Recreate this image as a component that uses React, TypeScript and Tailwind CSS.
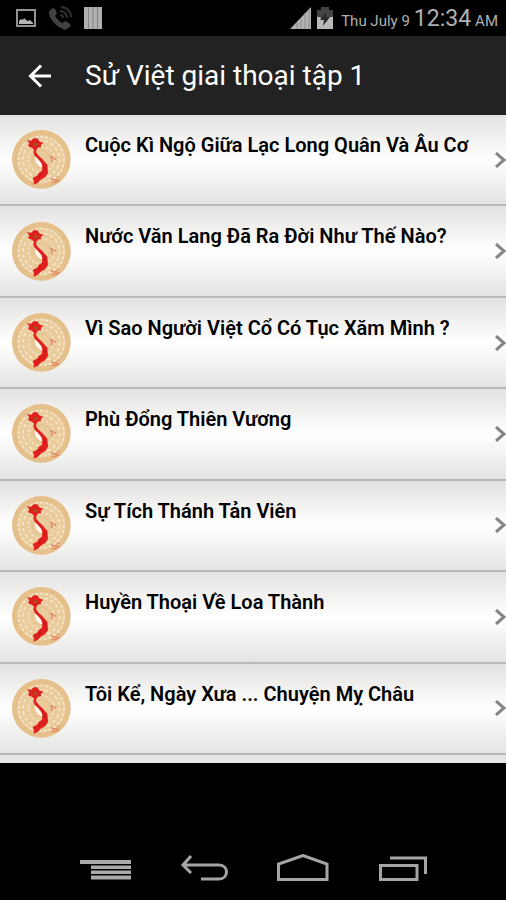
import React from 'react';

const STORIES = [
  'Cuộc Kì Ngộ Giữa Lạc Long Quân Và Âu Cơ',
  'Nước Văn Lang Đã Ra Đời Như Thế Nào?',
  'Vì Sao Người Việt Cổ Có Tục Xăm Mình ?',
  'Phù Đổng Thiên Vương',
  'Sự Tích Thánh Tản Viên',
  'Huyền Thoại Về Loa Thành',
  'Tôi Kể, Ngày Xưa ... Chuyện Mỵ Châu',
];

// Bronze drum medallion with the map of Vietnam
const DrumIcon: React.FC = () => (
  <svg viewBox="0 0 177 177" className="size-[59px] shrink-0" aria-hidden="true">
    <circle cx="88" cy="88" r="88" fill="#e5c08b" />
    <circle cx="88" cy="88" r="73" fill="#e9cb9c" />
    <g fill="none" stroke="#f5e6cd">
      <circle cx="88" cy="88" r="68" strokeWidth="5" strokeDasharray="9 6" />
      <circle cx="88" cy="88" r="55" strokeWidth="5" strokeDasharray="11 8" />
      <circle cx="88" cy="88" r="39" strokeWidth="4" strokeDasharray="8 6" />
    </g>
    <circle cx="88" cy="88" r="26" fill="none" stroke="#e3bf8c" strokeWidth="3" />
    <path d="M68 78L82 84L96 112L84 110L72 98Z" fill="#fffaf0" />
    <path
      d="M43 31L58 32L64 25L76 25L82 34L94 39L86 45L88 51L77 53L73 61L72 67L80 77L90 86L98 95L106 104L107 116L108 129L99 142L86 149L78 158L65 164L66 153L62 144L77 136L80 129L90 122L91 109L88 99L78 87L68 77L64 67L66 60L60 53L48 49L52 39Z"
      fill="#df201c"
    />
    <path d="M66 39L78 41L75 49L67 47Z" fill="#9a5a1c" />
    <path d="M96 106L100 118M86 134L80 143" stroke="#b81414" strokeWidth="3" />
    <path d="M115 79L123 84L119 89M127 89L131 84M117 92L123 94" fill="none" stroke="#e07a5c" strokeWidth="4" />
    <path
      d="M117 146L127 151L136 147M127 159L135 154L143 151M119 159L125 156M137 143L141 140"
      fill="none"
      stroke="#e2815f"
      strokeWidth="4"
    />
  </svg>
);

const StatusBar: React.FC = () => (
  <div className="h-9 bg-black flex items-center justify-between pl-4 pr-2 text-[#b0b0b0]">
    <div className="flex items-center gap-3">
      <svg viewBox="0 0 20 18" className="w-5 h-[18px]" aria-hidden="true">
        <rect x="1" y="1" width="18" height="16" fill="none" stroke="#929292" strokeWidth="2" />
        <path d="M3 15V12L5 10L7 11L8 9L10 11L12 12L14 11L17 14V15Z" fill="#b5b5b5" />
      </svg>
      <svg viewBox="0 0 24 26" className="w-6 h-[26px]" aria-hidden="true">
        <path
          d="M5 3L1 6C0 13 8 22 17 25L22 22C23 21 23 20 22 19L18 16L14 18C11 16 9 14 7 11L9 8L7 4Z"
          fill="#414141"
        />
        <path d="M12 10A3 3 0 0 1 15 13M12 6A7 7 0 0 1 19 13M13 2A10 10 0 0 1 23 12" fill="none" stroke="#303030" strokeWidth="2" />
      </svg>
      <svg viewBox="0 0 18 22" className="w-[18px] h-[22px]" aria-hidden="true">
        <rect width="18" height="22" fill="#b0b0b0" />
        <path d="M4.500 0V22M9 0V22M13.500 0V22" stroke="#858585" />
      </svg>
    </div>
    <div className="flex items-center">
      <svg viewBox="0 0 21 24" className="w-[21px] h-6 mr-1.5" aria-hidden="true">
        <path d="M0 23L21 1V23Z" fill="#b2b2b2" />
        <path d="M7 16V23M11 12V23M15 7V23M19 3V23" stroke="#8d8d8d" />
      </svg>
      <svg viewBox="0 0 16 24" className="w-4 h-6 mr-2" aria-hidden="true">
        <path d="M4 1H12V4H16V11H0V4H4Z" fill="#444444" />
        <path d="M0 11H3L7 13L11 11H16V23H0Z" fill="#b9b9b9" />
        <path d="M9 6L3 14H7L6 20L13 11H9Z" fill="#2c2c2c" />
      </svg>
      <p className="flex items-baseline gap-1 pt-1 text-[15px] leading-6 whitespace-nowrap">
        <span>Thu July 9</span>
        <span className="text-[23px] leading-6">12:34</span>
        <span>AM</span>
      </p>
    </div>
  </div>
);

const SystemNav: React.FC = () => (
  <nav className="h-16 bg-black flex justify-center items-center gap-[49px] px-4">
    <button type="button" aria-label="Menu">
      <svg viewBox="0 0 52 28" className="w-[52px] h-7" aria-hidden="true">
        <path d="M1 6H52V10H1ZM12 11.500H52V15H12ZM12 16.500H52V20H12ZM12 21.500H52V25.500H12Z" fill="#ababab" />
      </svg>
    </button>
    <button type="button" aria-label="Back">
      <svg viewBox="0 0 48 28" className="w-12 h-7" fill="none" stroke="#a5a5a5" strokeWidth="3" aria-hidden="true">
        <path d="M11 2L3 11L11 19M3 11H39C49 11 49 25 39 25H21" />
      </svg>
    </button>
    <button type="button" aria-label="Home">
      <svg viewBox="0 0 53 28" className="w-[53px] h-7" fill="none" stroke="#a5a5a5" strokeWidth="3" aria-hidden="true">
        <path d="M1.500 25.500V10L26 1.500L50 10V25.500Z" />
      </svg>
    </button>
    <button type="button" aria-label="Recent apps">
      <svg viewBox="0 0 49 28" className="w-[49px] h-7" fill="none" stroke="#a5a5a5" strokeWidth="3" aria-hidden="true">
        <path d="M1.500 11.500H38V25.500H1.500ZM11 4H46.500V20" />
      </svg>
    </button>
  </nav>
);

export default function App() {
  return (
    <div className="min-h-screen flex flex-col bg-black font-['Roboto',sans-serif]">
      <StatusBar />
      <header className="h-[79px] shrink-0 bg-[#222222] flex items-center pl-7 gap-8 text-white">
        <button type="button" aria-label="Back to library">
          <svg viewBox="0 0 25 24" className="w-[25px] h-6" fill="none" stroke="currentColor" strokeWidth="3" aria-hidden="true">
            <path d="M13 1.500L2.500 12L13 22.500M3 12H23" />
          </svg>
        </button>
        <h1 className="text-[28px] leading-9">Sử Việt giai thoại tập 1</h1>
      </header>

      <main className="flex-1 flex flex-col">
        <ul className="flex-1 flex flex-col">
          {STORIES.map((title) => (
            <li key={title} className="flex-1 flex border-b-2 border-[#b9b9b8]">
              <a
                href="#"
                className="flex-1 flex items-center pl-3 gap-3.5 bg-linear-to-b from-[#e3e2e0] via-white to-[#e4e4e2] text-black"
              >
                <DrumIcon />
                <span className="flex-1 self-start pt-[18px] text-xl leading-6 font-semibold">{title}</span>
                <svg viewBox="0 0 11 16" className="w-[11px] h-4 shrink-0" fill="none" stroke="#858585" strokeWidth="3" aria-hidden="true">
                  <path d="M1 1L9 8L1 15" />
                </svg>
              </a>
            </li>
          ))}
        </ul>
        <div className="h-2 bg-[#e6e5e3]" />
      </main>

      <div className="h-[73px] shrink-0 bg-black" />
      <SystemNav />
    </div>
  );
}
